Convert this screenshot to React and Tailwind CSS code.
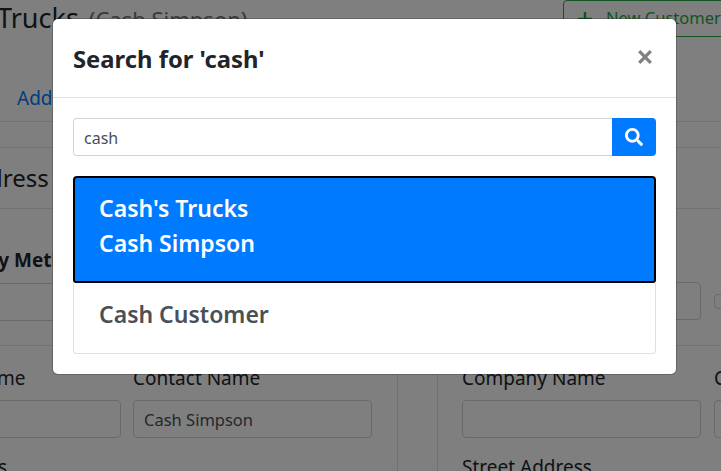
import React from 'react';
import { FaSearch } from 'react-icons/fa';

const font = "font-['Noto_Sans',sans-serif]";

function Field({ label, value, className = '' }) {
    return (
        <div className={`flex flex-col ${className}`}>
            <label className="h-[26px] text-[19px] leading-[26px] text-[#212529]">{label}</label>
            <div className="mt-[9px] flex h-[38px] items-center rounded border border-[#ced4da] px-[10px] pt-[2px] text-[16.5px] text-[#495057]">{value}</div>
        </div>
    );
}

function Page() {
    return (
        <div className="ml-[-118px] w-[1100px] text-[#212529]">
            <div className="flex h-[37px] items-start">
                <div className="flex w-[681px] items-baseline pl-[118px]">
                    <span className="ml-[-3px] text-[27px] leading-[36px]">Trucks</span>
                    <span className="ml-[10px] text-[22px] leading-[36px] text-[#6c757d]">(Cash Simpson)</span>
                </div>
                <div className="flex h-[37px] w-[200px] items-center gap-[13px] rounded border border-[#28a745] px-[13px] text-[16.5px] text-[#28a745]">
                    <svg width="16" height="16" viewBox="0 0 16 16">
                        <path d="M8 1v14M1 8h14" stroke="#28a745" strokeWidth="2.4" fill="none" />
                    </svg>
                    <span>New Customer</span>
                </div>
            </div>
            <div className="mt-[48px] h-[37px] border-b border-[#dee2e6] pl-[135px] text-[19px] leading-[26px] text-[#007bff]">Add</div>
            <div className="h-[26px] border-b border-[#dee2e6]" />
            <div className="flex h-[61px] items-center border-b border-[#dee2e6] text-[24px]">
                <span className="pl-[76px]">Address</span>
            </div>
            <div className="flex h-[137px] border-b border-[#dee2e6]">
                <div className="w-[515px] pl-[49px] pt-[38px]">
                    <div className="h-[36px] text-[19px] leading-[26px] font-bold">Delivery Method</div>
                    <div className="ml-[-49px] h-[38px] border border-[#ced4da]" />
                </div>
                <div className="flex w-[585px] items-start gap-[13px] pl-[65px] pt-[73px]">
                    <div className="h-[38px] w-[239px] rounded border border-[#ced4da]" />
                    <div className="mt-[12px] h-[15px] w-[15px] rounded-sm border border-[#ced4da]" />
                </div>
            </div>
            <div className="flex">
                <div className="flex w-[516px] gap-[12px] border-r border-[#dee2e6] pr-[25px] pt-[19px]">
                    <Field label="Company Name" className="w-[239px]" />
                    <Field label="Contact Name" value="Cash Simpson" className="w-[239px]" />
                </div>
                <div className="ml-[39px] flex gap-[13px] border-l border-[#dee2e6] pl-[24px] pt-[19px]">
                    <Field label="Company Name" className="w-[239px]" />
                    <Field label="Contact Name" className="w-[239px]" />
                </div>
            </div>
            <div className="flex">
                <div className="w-[516px] border-r border-[#dee2e6] pt-[16px] text-right text-[19px] leading-[26px]"><span className="mr-[390px]">Address</span></div>
                <div className="ml-[39px] border-l border-[#dee2e6] pl-[24px] pt-[16px] text-[19px] leading-[26px]">Street Address</div>
            </div>
        </div>
    );
}

export default function App() {
    return (
        <div className={`relative h-screen overflow-hidden bg-white ${font}`}>
            <Page />
            <div className="absolute inset-0 bg-black/50" />
            <div className="absolute left-[53px] top-[19px] w-[623px] overflow-hidden rounded-[5px] bg-white shadow-[0_0_0_1px_rgba(0,0,0,0.2)]">
                <div className="flex h-[79px] items-center justify-between border-b border-[#dee2e6] pl-[20px] pr-[22px]">
                    <h5 className="mt-[1px] text-[23.8px] font-bold leading-[36px] text-[#212529]">Search for 'cash'</h5>
                    <svg width="16" height="16" viewBox="0 0 16 16" className="mr-[1px] mt-[-2px]">
                        <path d="M2.2 2.2 13.8 13.8M13.8 2.2 2.2 13.8" stroke="#808080" strokeWidth="3.2" fill="none" />
                    </svg>
                </div>
                <div className="p-[20px]">
                    <div className="flex h-[38px]">
                        <div className="flex flex-1 items-center rounded-l border border-r-0 border-[#ced4da] px-[10px] pt-[1px] text-[16px] text-[#495057]">cash</div>
                        <button className="flex w-[44px] items-center justify-center rounded-r bg-[#007bff] text-white">
                            <FaSearch size={18} />
                        </button>
                    </div>
                    <div className="mt-[20px]">
                        <div className="rounded-t-[4px] rounded-b-[3px] border-2 border-black bg-[#007bff] px-[24px] pb-[20px] pt-[13px] text-[23px] font-semibold leading-[35px] text-white">
                            <div>Cash's Trucks</div>
                            <div>Cash Simpson</div>
                        </div>
                        <div className="h-[71px] rounded-b-[4px] border border-t-0 border-[#dfdfdf] px-[25px] pt-[14px] text-[23px] font-semibold leading-[35px] text-[#495057]">
                            Cash Customer
                        </div>
                    </div>
                </div>
            </div>
        </div>
    );
}
